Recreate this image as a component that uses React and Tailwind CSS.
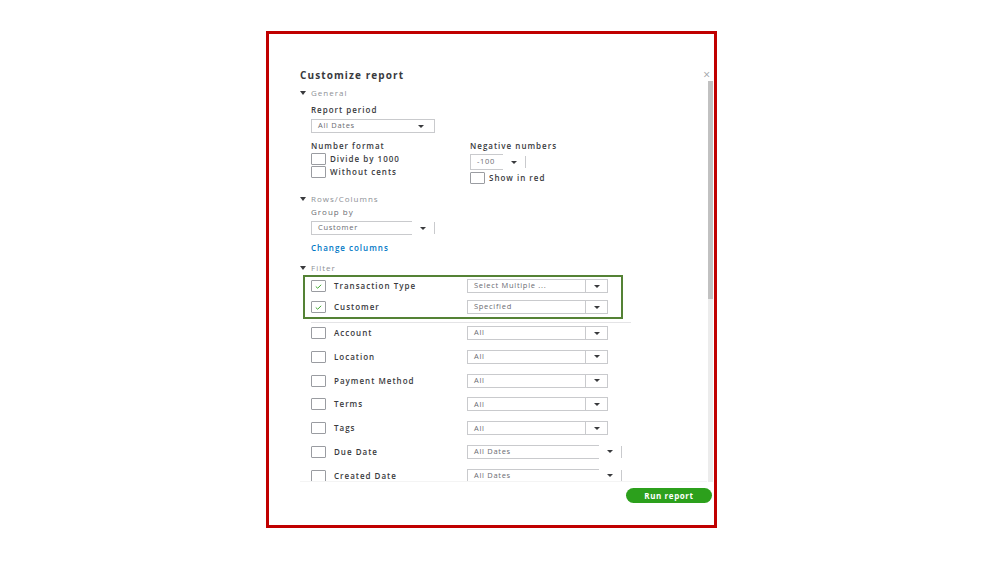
import React from 'react'

const font = { fontFamily: '"Open Sans", "Liberation Sans", sans-serif' }

function Caret() {
	return <span className="inline-block w-0 h-0 border-l-[3px] border-r-[3px] border-t-[3px] border-l-transparent border-r-transparent border-t-[#393a3d]" />
}

function Section({ title }) {
	return (
		<div className="flex items-center h-[8px]">
			<span className="w-[11px] flex items-center"><span className="inline-block w-0 h-0 border-l-[3.5px] border-r-[3.5px] border-t-[4px] border-l-transparent border-r-transparent border-t-[#393a3d]" /></span>
			<span className="text-[8px] leading-[8px] tracking-[1px] text-[#8d9096]">{title}</span>
		</div>
	)
}

function Label({ children, className = '' }) {
	return <div className={`text-[8px] leading-[10px] font-semibold tracking-[1px] text-[#393a3d] ${className}`}>{children}</div>
}

function Checkbox({ checked }) {
	return (
		<span className="w-[15px] h-[12px] border border-[#9a9ca1] rounded-[1px] bg-white flex items-center justify-center shrink-0">
			{checked && (
				<svg width="7" height="5" viewBox="0 0 7 5"><path d="M0.8 2.6 L2.7 4.2 L6.2 0.8" fill="none" stroke="#2ca01c" strokeWidth="0.9" /></svg>
			)}
		</span>
	)
}

// full box with divided arrow button
function FilterSelect({ value }) {
	return (
		<div className="flex w-[141px] h-[14px] border border-[#c9cacd] bg-white">
			<div className="flex-1 flex items-center pl-[6px] text-[7.5px] tracking-[0.7px] text-[#6b6c72]">{value}</div>
			<div className="w-[22px] border-l border-[#c9cacd] flex items-center justify-center"><Caret /></div>
		</div>
	)
}

// open-ended box, arrow outside, short right rule
function OpenSelect({ value, w, arrowW, h = 'h-[14px]' }) {
	return (
		<div className={`flex items-center ${h}`}>
			<div className={`${w} h-full border-l border-t border-b border-[#c9cacd] flex items-center pl-[6px] text-[7.5px] tracking-[0.7px] text-[#6b6c72]`}>{value}</div>
			<div className={`${arrowW} h-full flex items-center justify-center`}><Caret /></div>
			<div className="w-px h-[80%] bg-[#c9cacd]" />
		</div>
	)
}

function FilterRow({ label, value, checked, date }) {
	return (
		<div className="flex items-center h-[16px]">
			<Checkbox checked={checked} />
			<span className="ml-[8px] w-[133px] text-[8px] font-semibold tracking-[1px] text-[#393a3d]">{label}</span>
			{date ? <OpenSelect value={value} w="w-[132px]" arrowW="w-[22px]" /> : <FilterSelect value={value} />}
		</div>
	)
}

const rows = [
	['Account', 'All'],
	['Location', 'All'],
	['Payment Method', 'All'],
	['Terms', 'All'],
	['Tags', 'All'],
	['Due Date', 'All Dates', true],
	['Created Date', 'All Dates', true],
]

export default function App() {
	return (
		<div className="w-[999px] h-[562px] bg-white overflow-hidden" style={font}>
			<div className="ml-[266px] mt-[31px] w-[451px] h-[497px] border-[3px] border-[#c00000] pl-[31px] pr-[1px] pt-[35px] flex flex-col">
				<div className="flex items-center justify-between h-[12px]">
					<span className="text-[10px] font-bold tracking-[1.1px] text-[#393a3d]">Customize report</span>
					<span className="text-[12px] leading-none text-[#a0a2a6] mr-[3px]">×</span>
				</div>
				<div className="flex h-[401px]">
					<div className="flex-1 overflow-hidden border-b border-[#f4f4f4]">
						<div className="mt-[8px]"><Section title="General" /></div>
						<div className="pl-[11px]">
							<Label className="mt-[8px]">Report period</Label>
							<div className="mt-[4px] w-[124px] h-[14px] border border-[#c9cacd] flex items-center justify-between pl-[6px] pr-[10px] text-[7.5px] tracking-[0.7px] text-[#6b6c72]">
								<span>All Dates</span><Caret />
							</div>
							<div className="mt-[8px] flex">
								<div className="w-[159px]">
									<Label>Number format</Label>
									<div className="mt-[2px] flex items-center h-[12px]"><Checkbox /><span className="ml-[4px] text-[8px] font-semibold tracking-[1px] text-[#393a3d]">Divide by 1000</span></div>
									<div className="mt-[1px] flex items-center h-[12px]"><Checkbox /><span className="ml-[4px] text-[8px] font-semibold tracking-[1px] text-[#393a3d]">Without cents</span></div>
								</div>
								<div>
									<Label>Negative numbers</Label>
									<div className="mt-[3px]"><OpenSelect value="-100" w="w-[33px]" arrowW="w-[22px]" h="h-[16px]" /></div>
									<div className="mt-[2px] flex items-center h-[12px]"><Checkbox /><span className="ml-[4px] text-[8px] font-semibold tracking-[1px] text-[#393a3d]">Show in red</span></div>
								</div>
							</div>
						</div>
						<div className="mt-[11px]"><Section title="Rows/Columns" /></div>
						<div className="pl-[11px]">
							<div className="mt-[4px] text-[8px] leading-[10px] tracking-[1px] text-[#6b6c72]">Group by</div>
							<div className="mt-[4px]"><OpenSelect value="Customer" w="w-[101px]" arrowW="w-[22px]" /></div>
							<div className="mt-[8px] text-[8px] leading-[10px] font-semibold tracking-[1px] text-[#0077c5]">Change columns</div>
						</div>
						<div className="mt-[11px]"><Section title="Filter" /></div>
						<div className="mt-[3px] ml-[3px] w-[320px] border-2 border-[#548235] pl-[6px] pt-[1px] pb-[2px] flex flex-col gap-[5px]">
							<FilterRow label="Transaction Type" value="Select Multiple ..." checked />
							<FilterRow label="Customer" value="Specified" checked />
						</div>
						<div className="mt-[3px] ml-[11px] w-[320px] h-px bg-[#e4e4e6]" />
						<div className="mt-[2px] pl-[11px] flex flex-col gap-[7.8px]">
							{rows.map(([l, v, d]) => <FilterRow key={l} label={l} value={v} date={d} />)}
						</div>
					</div>
					<div className="w-[5px] ml-[1px] bg-[#ececec] flex flex-col">
						<div className="h-[218px] bg-[#c1c1c1]" />
					</div>
				</div>
				<div className="mt-[6px] flex justify-end pr-[1px]">
					<button className="w-[86px] h-[15px] rounded-full bg-[#2ca01c] text-white text-[8px] font-bold tracking-[0.6px] leading-none">Run report</button>
				</div>
			</div>
		</div>
	)
}
